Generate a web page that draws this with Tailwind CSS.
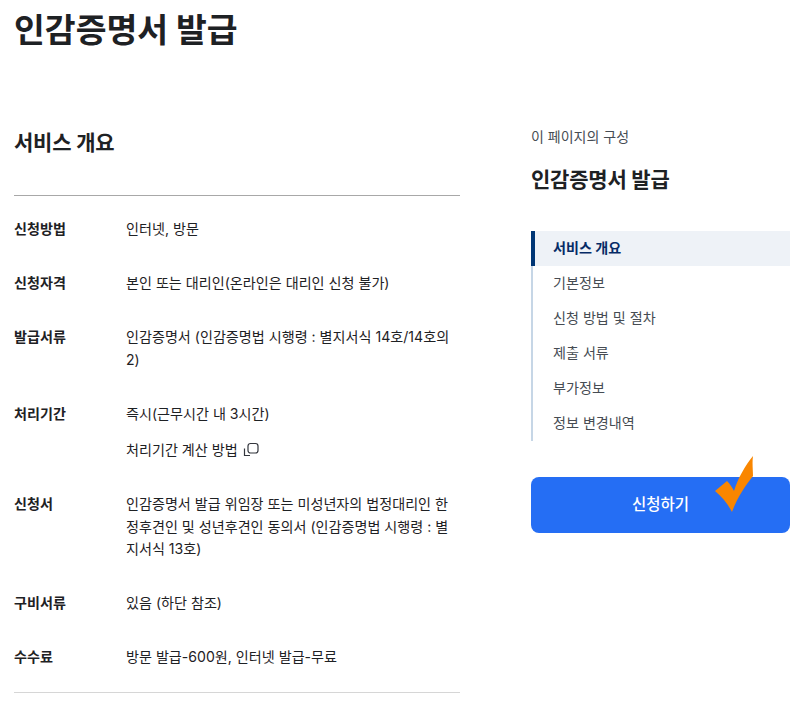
<!DOCTYPE html>
<html lang="ko">
<head>
<meta charset="utf-8">
<title>인감증명서 발급</title>
<script src="https://cdn.jsdelivr.net/npm/@tailwindcss/browser@4"></script>
</head>
<body class="bg-white text-[#1e2124] font-['Inter','Noto_Sans_CJK_KR',sans-serif] overflow-hidden">
<div class="w-[800px] h-[715px] overflow-hidden pl-[14px] pr-[10px]">
    <!-- Page title -->
    <h1 class="h-[126px] pt-[9px] text-[33.5px] leading-[42px] font-bold">인감증명서 발급</h1>

    <div class="flex justify-between">
        <!-- Service overview -->
        <section class="w-[446px]">
            <h2 class="h-[69px] pt-[1px] text-[21px] leading-[32px] font-bold tracking-[-0.2px]">서비스 개요</h2>
            <dl class="border-t border-[#a8a8a8] pt-[22px] text-[14.1px] leading-[22.5px]">
                <div class="flex pb-[31.5px]">
                    <dt class="w-[112px] shrink-0 font-bold">신청방법</dt>
                    <dd>인터넷, 방문</dd>
                </div>
                <div class="flex pb-[31.5px]">
                    <dt class="w-[112px] shrink-0 font-bold">신청자격</dt>
                    <dd>본인 또는 대리인(온라인은 대리인 신청 불가)</dd>
                </div>
                <div class="flex pb-[31.5px]">
                    <dt class="w-[112px] shrink-0 font-bold">발급서류</dt>
                    <dd class="w-[332px]">인감증명서 (인감증명법 시행령 : 별지서식 14호/14호의 2)</dd>
                </div>
                <div class="flex pb-[31.5px]">
                    <dt class="w-[112px] shrink-0 font-bold">처리기간</dt>
                    <dd>
                        <p>즉시(근무시간 내 3시간)</p>
                        <p class="mt-[14px] flex items-center gap-[5px]">처리기간 계산 방법
                            <svg class="w-[16px] h-[16px]" viewBox="0 0 16 16" fill="none" stroke="#33363d" stroke-width="1.2">
                                <rect x="5" y="1.5" width="10" height="9.5" rx="2.5"/>
                                <path d="M1.5 6.5v7h5.5"/>
                            </svg>
                        </p>
                    </dd>
                </div>
                <div class="flex pb-[31.5px]">
                    <dt class="w-[112px] shrink-0 font-bold">신청서</dt>
                    <dd class="w-[332px]">인감증명서 발급 위임장 또는 미성년자의 법정대리인 한정후견인 및 성년후견인 동의서 (인감증명법 시행령 : 별지서식 13호)</dd>
                </div>
                <div class="flex pb-[31.5px]">
                    <dt class="w-[112px] shrink-0 font-bold">구비서류</dt>
                    <dd>있음 (하단 참조)</dd>
                </div>
                <div class="flex pb-[23px] border-b border-[#d6d6d6]">
                    <dt class="w-[112px] shrink-0 font-bold">수수료</dt>
                    <dd>방문 발급-600원, 인터넷 발급-무료</dd>
                </div>
            </dl>
        </section>

        <!-- Side navigation -->
        <aside class="w-[259px]">
            <p class="text-[14px] leading-[22px] text-[#464c53]">이 페이지의 구성</p>
            <p class="mt-[16px] text-[21px] leading-[32px] font-bold tracking-[-0.2px]">인감증명서 발급</p>
            <ul class="mt-[35px] border-l-2 border-[#c6d6e6] text-[14.1px] text-[#464c53]">
                <li class="h-[35px] pb-[2px] -ml-[2px] pl-[18px] flex items-center bg-[#eef2f7] border-l-4 border-[#003675] text-[#052b66] font-bold">서비스 개요</li>
                <li class="h-[35px] pb-[2px] pl-[20px] flex items-center">기본정보</li>
                <li class="h-[35px] pb-[2px] pl-[20px] flex items-center">신청 방법 및 절차</li>
                <li class="h-[35px] pb-[2px] pl-[20px] flex items-center">제출 서류</li>
                <li class="h-[35px] pb-[2px] pl-[20px] flex items-center">부가정보</li>
                <li class="h-[35px] pb-[2px] pl-[20px] flex items-center">정보 변경내역</li>
            </ul>
            <div class="relative mt-[36px]">
                <button class="w-full h-[56px] rounded-[8px] bg-[#256ef4] text-white text-[15.5px] font-medium">신청하기</button>
                <svg class="absolute left-[184px] -top-[21px] w-[40px] h-[57px]" viewBox="0 0 40 57" fill="#f98600">
                    <path d="M0 35 L12 25 C15 28 17 31 19 35 C23 22 30 10 38 0 C37 7 38 14 38 20 C30 30 22 42 17 56 C13 48 7 41 0 35 Z"/>
                </svg>
            </div>
        </aside>
    </div>
</div>
</body>
</html>
